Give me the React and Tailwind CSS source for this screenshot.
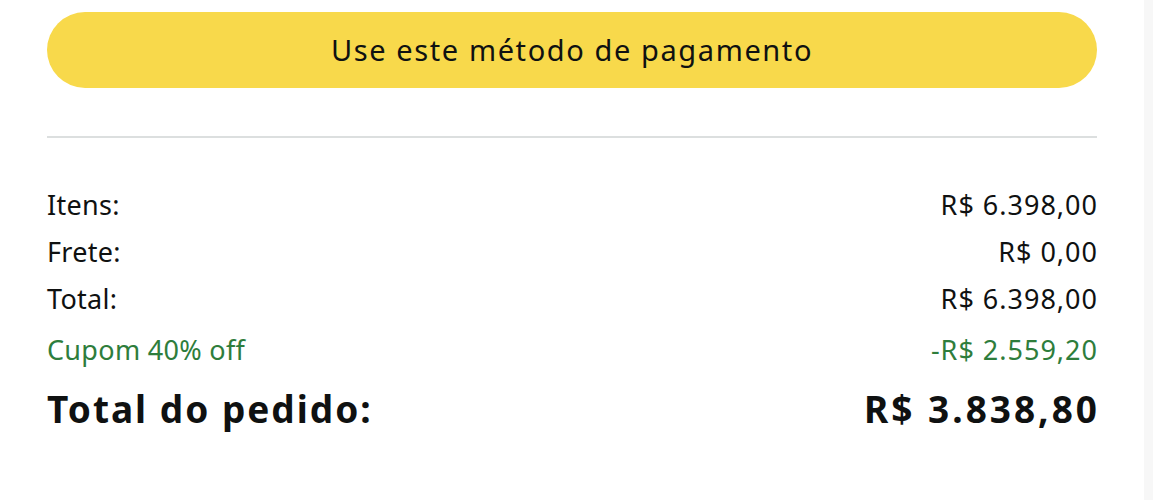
import React from "react";

const rows = [
  { label: "Itens:", value: "R$ 6.398,00" },
  { label: "Frete:", value: "R$ 0,00" },
  { label: "Total:", value: "R$ 6.398,00" },
];

function SummaryRow({ label, value, className = "" }) {
  return (
    <div className={`flex items-center justify-between leading-[47px] ${className}`}>
      <span className="tracking-[0.3px]">{label}</span>
      <span className="-mr-[1px] tracking-[1px]">{value}</span>
    </div>
  );
}

export default function App() {
  return (
    <div
      className="flex h-[500px] w-full bg-white text-[#0f1111]"
      style={{ fontFamily: '"Noto Sans", "Open Sans", sans-serif' }}
    >
      <main className="flex-1 px-[47px] pt-[12px]">
        <button className="flex h-[76px] w-full items-center justify-center rounded-full bg-[#f8d94b] text-[29px] tracking-[1.6px] text-[#0f1111]">
          Use este método de pagamento
        </button>

        <div className="mt-[48px] h-[2px] bg-[#dcdfdf]" />

        <div className="mt-[43px] text-[27px]">
          {rows.map((r) => (
            <SummaryRow key={r.label} label={r.label} value={r.value} />
          ))}
          <SummaryRow
            className="mt-[4px] text-[#2e7d3c]"
            label="Cupom 40% off"
            value="-R$ 2.559,20"
          />
          <div className="mt-[10px] flex items-center justify-between text-[37px] font-bold leading-[52px]">
            <span className="tracking-[2px]">Total do pedido:</span>
            <span className="-mr-[3px] tracking-[3px]">R$ 3.838,80</span>
          </div>
        </div>
      </main>
      <aside className="w-[9px] bg-[#f7f7f7]" />
    </div>
  );
}
